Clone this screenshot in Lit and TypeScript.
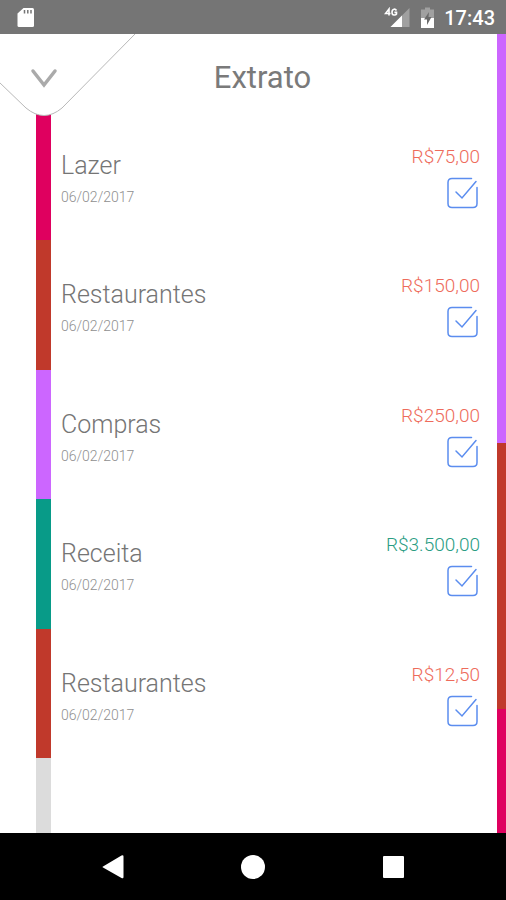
import { LitElement, html, css, svg } from "lit";
import { customElement, state } from "lit/decorators.js";
import { classMap } from "lit/directives/class-map.js";
import { styleMap } from "lit/directives/style-map.js";

interface Entry {
  name: string;
  date: string;
  amount: string;
  color: string;
  income: boolean;
  checked: boolean;
}

const ENTRIES: Entry[] = [
  { name: "Lazer", date: "06/02/2017", amount: "R$75,00", color: "#df005f", income: false, checked: true },
  { name: "Restaurantes", date: "06/02/2017", amount: "R$150,00", color: "#c0392b", income: false, checked: true },
  { name: "Compras", date: "06/02/2017", amount: "R$250,00", color: "#cc66ff", income: false, checked: true },
  { name: "Receita", date: "06/02/2017", amount: "R$3.500,00", color: "#089b88", income: true, checked: true },
  { name: "Restaurantes", date: "06/02/2017", amount: "R$12,50", color: "#c0392b", income: false, checked: true },
];

// Share of each category in the side chart
const SHARES = [
  { value: 409, color: "#cc66ff" },
  { value: 266, color: "#c0392b" },
  { value: 124, color: "#df005f" },
];

@customElement("status-bar")
export class StatusBar extends LitElement {
  static styles = css`
    :host {
      display: flex;
      align-items: center;
      height: 34px;
      box-sizing: border-box;
      padding: 2px 11px 0 17px;
      background: #757575;
      color: #fff;
      font: 500 20px/24px Roboto, sans-serif;
    }
    svg {
      display: block;
    }
    .signal {
      margin-left: auto;
      margin-right: 10px;
    }
    .battery {
      margin-right: 9px;
    }
  `;
  render() {
    return html`
      <svg width="18" height="20" viewBox="0 0 18 20" aria-hidden="true">
        <path d="M6.500 0h9q1.500 0 1.500 1.500v16q0 1.500-1.500 1.500h-13.500q-1.500 0-1.500-1.500v-12z" fill="#fff" />
        <path d="M7.500 2v3.500M10.800 2v3.500M14 2v3.500" stroke="#757575" stroke-width="1.500" />
      </svg>
      <svg class="signal" width="26" height="22" viewBox="0 0 26 22" role="img" aria-label="4G">
        <path d="M25.500 1v19H6.500z" fill="#a0a0a0" />
        <path d="M18 8.500v11.500H6.500z" fill="#fff" />
        <path d="M5 8.500V2L1.500 6.500h5M12.500 3.500Q11.500 2 10 2.200 8 2.500 8 5.200t2 2.800Q11.800 8.200 12.500 7V5.400H10.400" fill="none" stroke="#fff" stroke-width="1.600" />
      </svg>
      <svg class="battery" width="15" height="22" viewBox="0 0 15 22" aria-hidden="true">
        <path d="M1 2.500h4V.500h5V2.500h4V21H1z" fill="#a0a0a0" />
        <path d="M1 11h13v10H1z" fill="#fff" />
        <path d="M9 5 4 12.500h3v5.500l4.500-8h-3z" fill="#6a6a6a" />
      </svg>
      <span>17:43</span>
    `;
  }
}

@customElement("entry-row")
export class EntryRow extends LitElement {
  static properties = { entry: { attribute: false } };
  declare entry: Entry;

  static styles = css`
    :host {
      display: flex;
      font-family: Roboto, sans-serif;
      font-weight: 300;
    }
    .bar {
      width: 15px;
      flex: none;
    }
    .info {
      flex: 1;
      padding: 39px 0 16px 10px;
    }
    .name {
      margin: 0;
      font-size: 25px;
      line-height: 32px;
      font-weight: 300;
      color: #757575;
    }
    .date {
      display: block;
      font-size: 14px;
      line-height: 20px;
      margin-top: 5px;
      color: #8f8f8f;
    }
    .side {
      display: flex;
      flex-direction: column;
      align-items: flex-end;
      padding: 34px 17px 0 0;
    }
    .amount {
      font-size: 19px;
      line-height: 24px;
      color: #ee6b5b;
    }
    .amount.income {
      color: #2a9d83;
    }
    .check {
      position: relative;
      display: block;
      width: 32px;
      height: 32px;
      margin: 8px 1px 0 0;
    }
    .check svg {
      display: block;
    }
    .check input {
      position: absolute;
      inset: 0;
      width: 100%;
      height: 100%;
      margin: 0;
      opacity: 0;
      cursor: pointer;
    }
  `;

  private toggle() {
    this.entry = { ...this.entry, checked: !this.entry.checked };
  }

  render() {
    const e = this.entry;
    return html`
      <div class="bar" style=${styleMap({ background: e.color })}></div>
      <div class="info">
        <h2 class="name">${e.name}</h2>
        <time class="date">${e.date}</time>
      </div>
      <div class="side">
        <span class=${classMap({ amount: true, income: e.income })}>${e.amount}</span>
        <label class="check">
          <input type="checkbox" aria-label=${e.name} .checked=${e.checked} @change=${this.toggle} />
          <svg width="32" height="32" viewBox="0 0 32 32" fill="none" stroke="#5b8def" stroke-width="1.500" stroke-linecap="round">
            <path d="M24.500 1.500H5Q1 1.500 1 5.500V26.500Q1 30.500 5 30.500H26Q30 30.500 30 26.500V10.500" />
            ${e.checked ? svg`<path d="M9 15 15 21 29 4.500" />` : ""}
          </svg>
        </label>
      </div>
    `;
  }
}

@customElement("nav-bar")
export class NavBar extends LitElement {
  static styles = css`
    :host {
      display: flex;
      justify-content: center;
      align-items: center;
      gap: 92px;
      height: 67px;
      background: #000;
    }
    button {
      width: 48px;
      height: 48px;
      padding: 0;
      border: 0;
      background: none;
      cursor: pointer;
    }
    svg {
      display: block;
      margin: auto;
    }
  `;
  render() {
    return html`
      <button aria-label="Voltar">
        <svg width="24" height="24" viewBox="0 0 24 24"><path d="M2 11.500 20.500.500Q22.500-.500 22.500 1.500V22Q22.500 24 20.500 23L2 12.500Q1 12 2 11.500z" fill="#fff" /></svg>
      </button>
      <button aria-label="Início">
        <svg width="24" height="24" viewBox="0 0 24 24"><circle cx="12" cy="12" r="12" fill="#fff" /></svg>
      </button>
      <button aria-label="Recentes">
        <svg width="24" height="24" viewBox="0 0 24 24"><rect x="2" y="1" width="21" height="22" rx="1" fill="#fff" /></svg>
      </button>
    `;
  }
}

@customElement("app-root")
export class AppRoot extends LitElement {
  static styles = css`
    :host {
      display: flex;
      flex-direction: column;
      min-height: 100vh;
      background: #fff;
      font-family: Roboto, sans-serif;
    }
    .body {
      flex: 1;
      display: flex;
    }
    main {
      flex: 1;
      position: relative;
      display: flex;
      flex-direction: column;
    }
    header {
      height: 77px;
      display: flex;
      align-items: center;
      justify-content: center;
      padding: 0 0 0 28px;
      box-sizing: border-box;
    }
    h1 {
      margin: 10px 0 0;
      font-size: 31px;
      line-height: 36px;
      font-weight: 400;
      color: #7a7a7a;
    }
    .corner {
      position: absolute;
      top: 0;
      left: 0;
      padding: 0;
      border: 0;
      background: none;
      cursor: pointer;
    }
    .corner svg {
      display: block;
    }
    .list {
      flex: 1;
      display: flex;
      flex-direction: column;
      padding-left: 36px;
    }
    entry-row {
      flex: 19 0 0;
    }
    .rest {
      flex: 11 0 0;
      width: 15px;
      background: #dcdcdc;
    }
    .chart {
      width: 9px;
      display: flex;
      flex-direction: column;
    }
  `;

  @state() private entries = ENTRIES;

  render() {
    return html`
      <status-bar></status-bar>
      <div class="body">
        <main>
          <header><h1>Extrato</h1></header>
          <section class="list">
            ${this.entries.map((e) => html`<entry-row .entry=${e}></entry-row>`)}
            <div class="rest"></div>
          </section>
          <button class="corner" aria-label="Fechar">
            <svg width="136" height="83" viewBox="0 0 136 83" fill="none">
              <path d="M-1 48 26 74Q35 81.500 44 81.500T62 74L136-1H-1z" fill="#fff" stroke="#b8b8b8" />
              <path d="M33 37 44 51 55 37" stroke="#aaa" stroke-width="3.500" stroke-linecap="round" />
            </svg>
          </button>
        </main>
        <div class="chart">
          ${SHARES.map((s) => html`<div style=${styleMap({ background: s.color, flexGrow: String(s.value) })}></div>`)}
        </div>
      </div>
      <nav-bar></nav-bar>
    `;
  }
}
